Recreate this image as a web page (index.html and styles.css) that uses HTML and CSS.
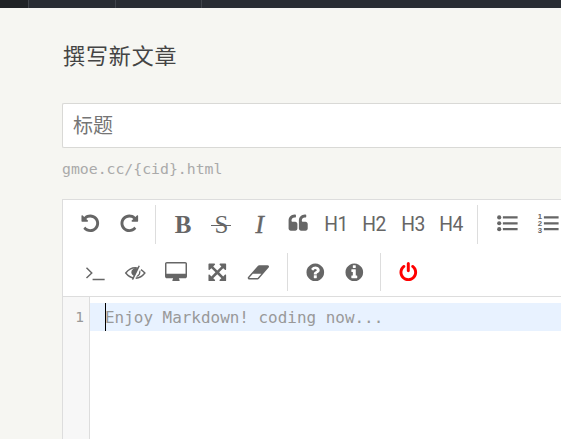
FILE: index.html
```
<!DOCTYPE html>
<html lang="zh-CN">
<head>
<meta charset="utf-8">
<title>撰写新文章</title>
<link rel="stylesheet" href="styles.css">
</head>
<body>
<nav class="topbar"><span class="tab active"></span><span class="tab wide"></span><span class="tab wide"></span></nav>
<main>
<h2>撰写新文章</h2>
<div class="title-input">标题</div>
<p class="slug">gmoe.cc/{cid}.html</p>
<section class="editor">
<div class="toolbar">
<div class="row">
<div class="group g1">
<svg class="icon" viewBox="0 0 1792 1792"><path id="undo" d="M1664 896q0 156-61 298t-164 245-245 164-298 61q-172 0-327-72.500t-264-204.500q-7-10-6.500-22.500t8.500-20.500l137-138q10-9 25-9 16 2 23 12 73 95 179 147t225 52q104 0 198.500-40.500t163.500-109.500 109.500-163.500 40.500-198.500-40.500-198.500-109.500-163.500-163.500-109.500-198.500-40.500q-98 0-188 35.500t-160 101.500l137 138q31 30 14 69-17 40-59 40h-448q-26 0-45-19t-19-45v-448q0-42 40-59 39-17 69 14l130 129q107-101 244.500-156.500t284.500-55.500q156 0 298 61t245 164 164 245 61 298z"/></svg>
<svg class="icon" viewBox="0 0 1792 1792"><use href="#undo" transform="translate(1792 0) scale(-1 1)"/></svg>
</div>
<div class="group g2">
<span class="serif bold">B</span>
<span class="serif strike"><span>S</span></span>
<span class="serif italic">I</span>
<svg class="icon" viewBox="0 0 1792 1792"><path id="quote" d="M832 960v384q0 80-56 136t-136 56h-384q-80 0-136-56t-56-136v-704q0-104 40.500-198.500t109.500-163.500 163.500-109.500 198.500-40.500h64q26 0 45 19t19 45v128q0 26-19 45t-45 19h-64q-106 0-181 75t-75 181v32q0 40 28 68t68 28h224q80 0 136 56t56 136z"/><use href="#quote" x="896"/></svg>
<span class="head">H1</span><span class="head">H2</span><span class="head">H3</span><span class="head">H4</span>
</div>
<div class="group g3">
<svg class="icon" viewBox="0 0 1792 1792"><circle cx="192" cy="384" r="180"/><circle cx="192" cy="896" r="180"/><circle cx="192" cy="1408" r="180"/><path d="M512 288h1280v192H512zM512 800h1280v192H512zM512 1312h1280v192H512z"/></svg>
<svg class="icon" viewBox="0 0 1792 1792"><path d="M512 288h1280v192H512zM512 800h1280v192H512zM512 1312h1280v192H512z"/><text class="digits" x="-20" y="480">1</text><text class="digits" x="-20" y="1130">2</text><text class="digits" x="-20" y="1780">3</text></svg>
</div>
</div>
<div class="row second">
<div class="group g4">
<svg class="icon" viewBox="0 0 1792 1792"><path class="line" d="M130 500L590 950L130 1400M660 1530H1710"/></svg>
<svg class="icon" viewBox="0 0 1792 1792"><path class="line" d="M790 1395Q380 1350 64 960Q410 500 896 500Q1020 500 1130 532M1390 655Q1580 775 1728 960Q1410 1380 930 1408M1240 330L650 1530"/><path d="M1315 690L1240 820Q1250 1050 1060 1180L955 1340Q1210 1290 1310 1070Q1385 870 1315 690zM810 1230L1110 590Q900 470 700 600Q520 730 550 960Q590 1140 810 1230z"/></svg>
<svg class="icon desktop" viewBox="64 0 1920 1792"><path d="M1856 992v-832q0-13-9.500-22.500t-22.500-9.500h-1600q-13 0-22.500 9.500t-9.500 22.500v832q0 13 9.500 22.500t22.500 9.500h1600q13 0 22.500-9.500t9.500-22.500zm128-832v1088q0 66-47 113t-113 47h-544q0 37 16 77.500t32 71 16 43.500q0 26-19 45t-45 19h-512q-26 0-45-19t-19-45q0-14 16-44t32-70 16-78h-544q-66 0-113-47t-47-113v-1088q0-66 47-113t113-47h1600q66 0 113 47t47 113z"/></svg>
<svg class="icon" viewBox="0 0 1792 1792"><path d="M1411 541l-355 355 355 355 144-144q29-31 70-14 39 17 39 59v448q0 26-19 45t-45 19h-448q-42 0-59-40-17-39 14-69l144-144-355-355-355 355 144 144q31 30 14 69-17 40-59 40h-448q-26 0-45-19t-19-45v-448q0-42 40-59 39-17 69 14l144 144 355-355-355-355-144 144q-19 19-45 19-12 0-24-5-40-17-40-59v-448q0-26 19-45t45-19h448q42 0 59 40 17 39-14 69l-144 144 355 355 355-355-144-144q-31-30-14-69 17-40 59-40h448q26 0 45 19t19 45v448q0 42-39 59-13 5-25 5-26 0-45-19z"/></svg>
<svg class="icon eraser" viewBox="0 0 1984 1792"><path d="M960 1408l336-384h-768l-336 384h768zm1013-1077q15 34 9.500 71.500t-30.500 65.500l-896 1024q-38 44-96 44h-768q-38 0-69.500-20.500t-47.500-54.500q-15-34-9.500-71.500t30.500-65.500l896-1024q38-44 96-44h768q38 0 69.500 20.500t47.500 54.500z"/></svg>
</div>
<div class="group g5">
<svg class="icon" viewBox="0 0 1792 1792"><path d="M1024 1376v-192q0-14-9-23t-23-9h-192q-14 0-23 9t-9 23v192q0 14 9 23t23 9h192q14 0 23-9t9-23zm256-672q0-88-55.500-163t-138.500-116-170-41q-243 0-371 213-15 24 8 42l132 100q7 6 19 6 16 0 25-12 53-68 86-92 34-24 86-24 48 0 85.500 26t37.500 59q0 38-20 61t-68 45q-63 28-115.500 86.500t-52.500 125.500v36q0 14 9 23t23 9h192q14 0 23-9t9-23q0-19 21.500-49.500t54.500-49.500q32-18 49-28.500t46-35 44.500-48 28-60.500 12.500-81zm384 192q0 209-103 385.500t-279.500 279.500-385.500 103-385.500-103-279.500-279.500-103-385.500 103-385.500 279.500-279.500 385.500-103 385.500 103 279.500 279.500 103 385.500z"/></svg>
<svg class="icon" viewBox="0 0 1792 1792"><path d="M1152 1376v-160q0-14-9-23t-23-9h-96v-512q0-14-9-23t-23-9h-320q-14 0-23 9t-9 23v160q0 14 9 23t23 9h96v320h-96q-14 0-23 9t-9 23v160q0 14 9 23t23 9h448q14 0 23-9t9-23zm-128-896v-160q0-14-9-23t-23-9h-192q-14 0-23 9t-9 23v160q0 14 9 23t23 9h192q14 0 23-9t9-23zm640 416q0 209-103 385.500t-279.500 279.500-385.500 103-385.500-103-279.500-279.500-103-385.500 103-385.500 279.500-279.500 385.500-103 385.500 103 279.500 279.500 103 385.500z"/></svg>
</div>
<div class="group g6">
<svg class="icon power" viewBox="0 0 1792 1792"><path d="M1664 896q0 156-61 298t-164 245-245 164-298 61-298-61-245-164-164-245-61-298q0-182 80.500-343t226.500-270q43-32 95.500-25t83.500 50q32 42 24.500 94.500t-49.500 84.500q-98 74-151.500 181t-53.500 228q0 104 40.500 198.500t109.500 163.500 163.500 109.500 198.500 40.500 198.500-40.500 163.500-109.500 109.500-163.500 40.500-198.500q0-121-53.500-228t-151.500-181q-42-32-49.500-84.500t24.500-94.500q31-43 84-50t95 25q146 109 226.500 270t80.500 343zm-640-768v640q0 52-38 90t-90 38-90-38-38-90v-640q0-52 38-90t90-38 90 38 38 90z"/></svg>
</div>
</div>
</div>
<div class="code">
<div class="gutter">1</div>
<div class="lines"><div class="active-line"><span class="cursor"></span><span class="hint">Enjoy Markdown! coding now...</span></div></div>
</div>
</section>
</main>
</body>
</html>
```
FILE: styles.css
```
* { box-sizing: border-box; }
body {
  margin: 0;
  height: 439px;
  overflow: hidden;
  background: #f6f6f2;
  color: #444;
  font-family: "Noto Sans", "Noto Sans CJK SC", sans-serif;
}
.topbar { display: flex; height: 8px; background: #292d33; }
.tab { width: 87px; border-right: 1px solid #41454b; }
.tab.active { width: 29px; background: #202326; }
.tab.wide { width: 87px; }
.tab.wide + .tab.wide { width: 86px; }
main { padding-left: 62px; }
h2 {
  margin: 30px 0 0;
  padding-left: 1px;
  height: 36px;
  line-height: 33px;
  font-family: "Noto Sans CJK SC", sans-serif;
  font-size: 22px;
  font-weight: 400;
  letter-spacing: 0.9px;
}
.title-input {
  margin-top: 29px;
  height: 45px;
  padding-left: 10px;
  line-height: 42px;
  border: 1px solid #d9d9d6;
  border-right: 0;
  border-radius: 2px 0 0 2px;
  background: #fff;
  color: #757575;
  font-family: "Noto Sans CJK SC", sans-serif;
  font-size: 20px;
}
.slug {
  margin: 11px 0 0;
  height: 20px;
  line-height: 20px;
  color: #aaa;
  font-family: "DejaVu Sans Mono", monospace;
  font-size: 14.8px;
}
.editor { margin-top: 20px; border: 1px solid #ddd; border-right: 0; background: #fff; }
.toolbar { height: 97px; padding-top: 5px; border-bottom: 1px solid #ddd; color: #666; }
.row { display: flex; height: 39px; }
.row.second { margin-top: 9px; height: 38px; }
.group { display: flex; flex: none; align-items: center; border-right: 1px solid #ddd; }
.icon { width: 20.6px; height: 20.6px; fill: currentColor; overflow: visible; flex: none; }
.line { fill: none; stroke: currentColor; stroke-width: 125; }
.g1 { width: 93px; padding: 0 0 2px 17px; gap: 18px; }
.g2 { width: 322px; padding-left: 8px; }
.g2 > * { width: 38.3px; flex: none; }
.g2 > .icon { margin-bottom: 2px; }
.g3 { padding: 0 0 2px 19px; gap: 20.4px; border: 0; }
.g4 { width: 225px; padding-left: 22px; gap: 19.6px; }
.g5 { width: 93px; padding-left: 17px; gap: 18px; }
.g6 { padding-left: 17.4px; border: 0; }
.desktop { width: 22px; }
.eraser { width: 22px; }
.power { color: #f00; }
.serif { text-align: center; font: 25px/39px "Liberation Serif", serif; }
.bold { font-weight: 700; }
.italic { font-style: italic; -webkit-text-stroke: 0.5px currentColor; }
.strike {
  display: flex;
  justify-content: center;
  background: linear-gradient(currentColor, currentColor) center 20px / 20px 1px no-repeat;
}
.head { display: flex; justify-content: center; font: 20.5px/39px Roboto, sans-serif; letter-spacing: -0.4px; transform: scaleX(.94); }
.digits { font: 700 680px "Liberation Sans", sans-serif; }
.code { display: flex; height: 160px; font-family: "DejaVu Sans Mono", monospace; }
.gutter {
  width: 27px;
  padding: 6px 5px 0 0;
  border-right: 1px solid #ddd;
  background: #f7f7f7;
  color: #999;
  font-size: 14.5px;
  line-height: 28px;
  text-align: right;
}
.lines { flex: 1; padding-top: 6px; }
.active-line { display: flex; height: 28px; padding-left: 15px; background: #e8f2ff; }
.cursor { width: 1px; background: #000; margin-right: -1px; }
.hint { color: #999; font-size: 15.95px; line-height: 30px; white-space: pre; }
```
